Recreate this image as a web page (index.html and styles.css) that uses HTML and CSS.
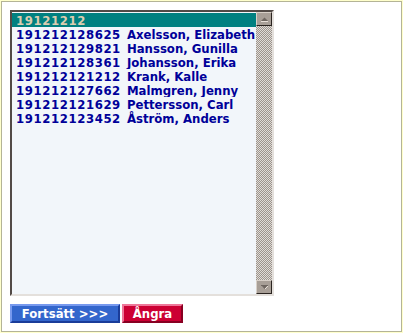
FILE: index.html
```
<!DOCTYPE html>
<html>
<head>
<meta charset="utf-8">
<link rel="stylesheet" href="styles.css">
</head>
<body>
<div class="frame">
  <div class="inner">
    <div class="listbox">
      <div class="options">
        <div class="opt selected"><span class="pnr">19121212</span></div>
        <div class="opt"><span class="pnr">191212128625</span> Axelsson, Elizabeth</div>
        <div class="opt"><span class="pnr">191212129821</span> Hansson, Gunilla</div>
        <div class="opt"><span class="pnr">191212128361</span> Johansson, Erika</div>
        <div class="opt"><span class="pnr">191212121212</span> Krank, Kalle</div>
        <div class="opt"><span class="pnr">191212127662</span> Malmgren, Jenny</div>
        <div class="opt"><span class="pnr">191212121629</span> Pettersson, Carl</div>
        <div class="opt"><span class="pnr">191212123452</span> Åström, Anders</div>
      </div>
      <div class="scrollbar">
        <div class="sbtn"><svg width="9" height="5" viewBox="0 0 9 5"><path d="M1 4 L4.5 0.5 L8 4 Z" fill="#6e6660"/><path d="M1 4.5 H8" stroke="#e8e0d8" stroke-width="1"/></svg></div>
        <div class="track"></div>
        <div class="sbtn down"><svg width="9" height="5" viewBox="0 0 9 5"><path d="M1 0.5 H8" stroke="#6e6660" stroke-width="1"/><path d="M2 1 L4.5 4 L7 1 Z" fill="#6e6660"/><path d="M5 4 L8 1" stroke="#e8e0d8" stroke-width="1"/></svg></div>
      </div>
    </div>
    <div class="buttons">
      <button class="btn go">Fortsätt &gt;&gt;&gt;</button>
      <button class="btn undo">Ångra</button>
    </div>
  </div>
</div>
</body>
</html>
```
FILE: styles.css
```
html, body {
  margin: 0;
  padding: 0;
  background: #ffffff;
}
.frame {
  width: 403px;
  height: 333px;
  box-sizing: border-box;
  border: 1px solid #ffffcc;
}
.inner {
  height: 100%;
  box-sizing: border-box;
  border: 1px solid #b4b496;
  padding: 8px 0 0 8px;
  background: #ffffff;
}
.listbox {
  width: 264px;
  height: 286px;
  box-sizing: border-box;
  border-style: solid;
  border-width: 2px;
  border-color: #524a46 #e4e0dc #e4e0dc #524a46;
  background: #f2f6fa;
  display: flex;
}
.options {
  flex: 1;
  padding-top: 1px;
  font-family: "DejaVu Sans Condensed", "DejaVu Sans", Verdana, sans-serif;
  font-stretch: condensed;
  font-weight: bold;
  font-size: 13px;
  color: #000099;
}
.opt {
  height: 14px;
  line-height: 15px;
  padding-left: 4px;
  white-space: nowrap;
  overflow: hidden;
}
.pnr {
  letter-spacing: 0.6px;
  margin-right: 2px;
}
.opt.selected {
  background: #008080;
  color: #dccdb0;
}
.scrollbar {
  width: 16px;
  display: flex;
  flex-direction: column;
  background-color: #d0cac4;
  background-image: repeating-conic-gradient(#9c948c 0 25%, #e0dcd8 0 50%);
  background-size: 2px 2px;
}
.track {
  flex: 1;
}
.sbtn {
  height: 14px;
  width: 16px;
  box-sizing: border-box;
  background: #a89f97;
  border-style: solid;
  border-width: 1px;
  border-color: #d8d0c8 #2a2420 #2a2420 #d8d0c8;
  display: flex;
  align-items: center;
  justify-content: center;
}
.buttons {
  display: flex;
  gap: 2px;
  margin-top: 8px;
}
.btn {
  font-family: "DejaVu Sans Condensed", "DejaVu Sans", Verdana, sans-serif;
  font-stretch: condensed;
  font-weight: bold;
  font-size: 13px;
  color: #ffffff;
  height: 19px;
  padding: 0 4px;
  border-style: solid;
  border-width: 2px;
  line-height: 15px;
  margin: 0;
}
.go {
  width: 110px;
  background: #3366cc;
  border-color: #7799ee #1a3c99 #1a3c99 #7799ee;
}
.undo {
  width: 61px;
  background: #cc0033;
  border-color: #ee7799 #880022 #880022 #ee7799;
}
```
